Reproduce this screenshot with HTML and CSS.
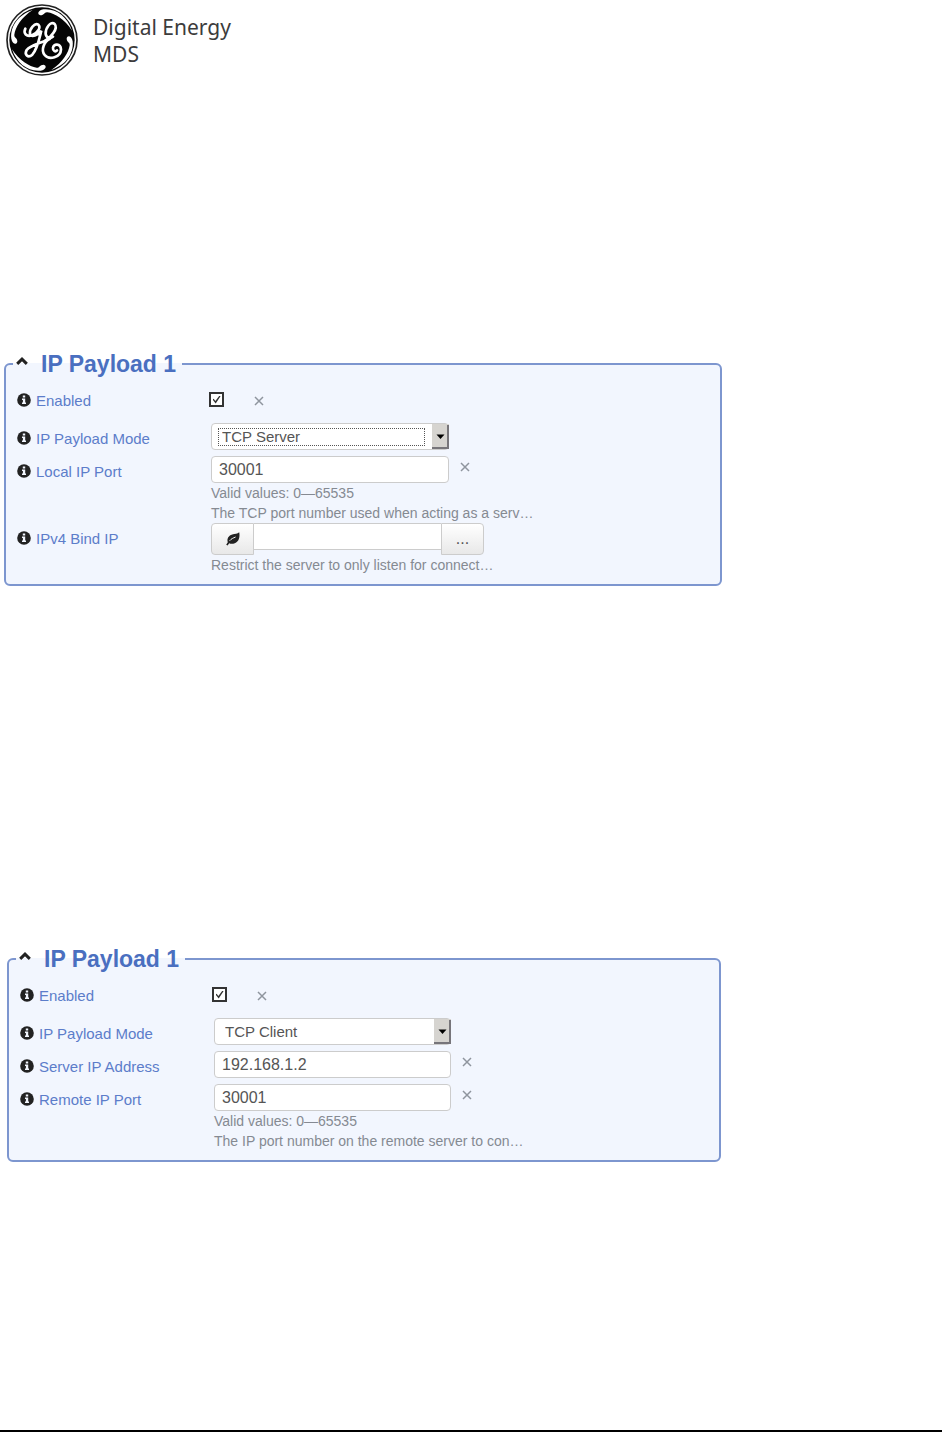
FILE: index.html
```html
<!DOCTYPE html>
<html lang="en">
  <head>
    <meta charset="UTF-8" />
    <meta name="viewport" content="width=device-width, initial-scale=1.0" />
    <title>Digital Energy MDS - IP Payload</title>
    <link rel="stylesheet" href="styles.css">
  </head>
  <body>
    <!-- shared icons -->
    <svg class="sprite" aria-hidden="true">
      <symbol id="icon-info" viewBox="0 0 14 14">
        <circle cx="7" cy="7" r="6.8" fill="#222" />
        <path d="M5.8 2.6h2.4v1.9H5.8zM5 5.6h3.2v4H9V11H5V9.600h.9V7H5z" fill="#f2f6fe" />
      </symbol>
      <symbol id="icon-close" viewBox="0 0 10 10">
        <path d="M1 1l8 8M9 1L1 9" stroke="#8f959e" stroke-width="1.5" />
      </symbol>
      <symbol id="icon-chevron" viewBox="0 0 12 8">
        <path d="M1.200 6.800L6 2.200l4.800 4.600" fill="none" stroke="#222" stroke-width="3" />
      </symbol>
      <symbol id="icon-arrow" viewBox="0 0 17 25">
        <path d="M0 0h17v25H0z" fill="#d6d4d0" />
        <path d="M0 24h16V1" fill="none" stroke="#77757a" stroke-width="2" />
        <path d="M4.500 10.500h8L8.500 15z" fill="#000" />
      </symbol>
      <symbol id="icon-leaf" viewBox="0 0 16 14">
        <path d="M14.200.2C15.200 5 13.800 9.800 9.800 11.200 7.500 12 5.500 11.800 4.200 11.200L2.600 13.600 1.200 12.800 2.800 10.200C1.600 6.400 3.800 3.400 7.200 2.400 10 1.600 12.400 1.800 14.200.2z" fill="#222" />
        <path d="M4.600 8.800C6.200 6.800 8.200 6 10.600 5" fill="none" stroke="#f4f4f4" stroke-width="1" />
      </symbol>
    </svg>

    <header class="brand">
      <svg class="brand-logo" viewBox="18 12 216 216" role="img" aria-label="GE">
        <circle cx="126" cy="120" r="105" fill="#fff" stroke="#222" stroke-width="5" />
        <circle cx="126" cy="120" r="98" fill="#050505" />
        <g fill="#fff">
          <path id="swirl" d="M121 46C111 44 113 31 130 28C168 24 202 50 216 92C194 58 164 40 142 37C132 36 134 46 121 46z" />
          <use href="#swirl" transform="rotate(90 126 120)" />
          <use href="#swirl" transform="rotate(180 126 120)" />
          <use href="#swirl" transform="rotate(270 126 120)" />
        </g>
        <g fill="none" stroke="#fff" stroke-width="8" stroke-linecap="round">
          <path d="M76 86C69 100 80 112 96 106C112 100 124 82 115 74C104 68 88 86 90 102C94 114 114 106 124 92C118 116 112 148 97 164C84 176 72 164 80 150C90 138 112 132 136 122" />
          <path d="M136 122C152 112 176 86 164 72C152 62 136 84 137 102C139 114 151 118 159 110M150 116C132 124 122 150 134 165C148 182 182 172 183 148C182 130 160 130 159 144C158 152 166 157 171 151" />
        </g>
      </svg>
      <p class="brand-name">Digital Energy<br>MDS</p>
    </header>

    <main>
      <form>
        <fieldset class="payload payload-server">
          <legend>
            <button type="button" class="icon-button" aria-label="Collapse"><svg class="chevron"><use href="#icon-chevron" /></svg></button>
            IP Payload 1
          </legend>
          <div class="field field-check">
            <label for="server-enabled"><svg class="info"><use href="#icon-info" /></svg>Enabled</label>
            <div class="control">
              <input type="checkbox" id="server-enabled" checked />
              <button type="button" class="icon-button" aria-label="Clear enabled"><svg class="close"><use href="#icon-close" /></svg></button>
            </div>
          </div>
          <div class="field">
            <label for="server-mode"><svg class="info"><use href="#icon-info" /></svg>IP Payload Mode</label>
            <div class="control">
              <span class="select focused">
                <select id="server-mode">
                  <option selected>TCP Server</option>
                  <option>TCP Client</option>
                </select>
                <svg class="arrow"><use href="#icon-arrow" /></svg>
              </span>
            </div>
          </div>
          <div class="field hinted">
            <label for="local-port"><svg class="info"><use href="#icon-info" /></svg>Local IP Port</label>
            <div>
              <div class="control">
                <input type="text" id="local-port" value="30001" />
                <button type="button" class="icon-button" aria-label="Clear port"><svg class="close"><use href="#icon-close" /></svg></button>
              </div>
              <p class="hint">Valid values: 0—65535</p>
              <p class="hint">The TCP port number used when acting as a serv…</p>
            </div>
          </div>
          <div class="field hinted">
            <label for="bind-ip"><svg class="info"><use href="#icon-info" /></svg>IPv4 Bind IP</label>
            <div>
              <div class="input-group">
                <button type="button" aria-label="Pick address"><svg class="leaf"><use href="#icon-leaf" /></svg></button>
                <input type="text" id="bind-ip" />
                <button type="button">...</button>
              </div>
              <p class="hint">Restrict the server to only listen for connect…</p>
            </div>
          </div>
        </fieldset>

        <fieldset class="payload payload-client">
          <legend>
            <button type="button" class="icon-button" aria-label="Collapse"><svg class="chevron"><use href="#icon-chevron" /></svg></button>
            IP Payload 1
          </legend>
          <div class="field field-check">
            <label for="client-enabled"><svg class="info"><use href="#icon-info" /></svg>Enabled</label>
            <div class="control">
              <input type="checkbox" id="client-enabled" checked />
              <button type="button" class="icon-button" aria-label="Clear enabled"><svg class="close"><use href="#icon-close" /></svg></button>
            </div>
          </div>
          <div class="field">
            <label for="client-mode"><svg class="info"><use href="#icon-info" /></svg>IP Payload Mode</label>
            <div class="control">
              <span class="select">
                <select id="client-mode">
                  <option>TCP Server</option>
                  <option selected>TCP Client</option>
                </select>
                <svg class="arrow"><use href="#icon-arrow" /></svg>
              </span>
            </div>
          </div>
          <div class="field">
            <label for="server-address"><svg class="info"><use href="#icon-info" /></svg>Server IP Address</label>
            <div class="control">
              <input type="text" id="server-address" value="192.168.1.2" />
              <button type="button" class="icon-button" aria-label="Clear address"><svg class="close"><use href="#icon-close" /></svg></button>
            </div>
          </div>
          <div class="field hinted">
            <label for="remote-port"><svg class="info"><use href="#icon-info" /></svg>Remote IP Port</label>
            <div>
              <div class="control">
                <input type="text" id="remote-port" value="30001" />
                <button type="button" class="icon-button" aria-label="Clear port"><svg class="close"><use href="#icon-close" /></svg></button>
              </div>
              <p class="hint">Valid values: 0—65535</p>
              <p class="hint">The IP port number on the remote server to con…</p>
            </div>
          </div>
        </fieldset>
      </form>
    </main>

    <footer></footer>
  </body>
</html>
```

FILE: styles.css
```css
* {
  box-sizing: border-box;
}
body {
  font-family: "Liberation Sans", Arial, sans-serif;
  background: #ffffff;
  margin: 0;
  min-height: 100vh;
  display: flex;
  flex-direction: column;
}
svg {
  display: block;
}
.sprite {
  display: none;
}

/* Header */
.brand {
  display: flex;
  align-items: flex-start;
  gap: 15px;
  height: 80px;
  padding: 4px 6px;
}
.brand-logo {
  width: 72px;
  height: 72px;
}
.brand-name {
  margin: 0;
  padding-top: 10px;
  font-family: "Noto Sans", sans-serif;
  font-size: 21px;
  line-height: 27px;
  color: #3c3c3c;
}

/* Panels */
main {
  padding-top: 271px;
}
.payload {
  min-width: 0;
  margin: 0 220px 0 4px;
  padding: 8px 7px 9px;
  border: 2px solid #7d96cf;
  border-radius: 6px;
  background-color: #f2f6fe;
}
.payload-client {
  margin: 360px 221px 0 7px;
}
legend {
  display: flex;
  align-items: center;
  gap: 13px;
  padding: 0 6px 0 3px;
  font-size: 23px;
  font-weight: bold;
  line-height: 26px;
  color: #4a6fc0;
}
.icon-button {
  padding: 0;
  border: none;
  background: none;
  cursor: pointer;
}
.chevron {
  width: 12px;
  height: 8px;
  margin-bottom: 6px;
}

/* Rows */
.field {
  display: grid;
  grid-template-columns: 198px 1fr;
  align-items: start;
  margin-top: 6px;
}
.field-check,
.hinted + .field {
  margin-top: 0;
}
.field-check {
  height: 32px;
}
.field label {
  display: flex;
  align-items: center;
  gap: 5px;
  padding: 6px 0 0 4px;
  font-size: 15px;
  line-height: 20px;
  color: #5c7dca;
}
.info {
  width: 14px;
  height: 14px;
  margin-bottom: 2px;
}
.control {
  display: flex;
  align-items: flex-start;
  gap: 11px;
}
.close {
  width: 10px;
  height: 10px;
}
.control .icon-button {
  padding-top: 6px;
}
.field-check .control {
  align-items: center;
  gap: 30px;
  padding-top: 7px;
}
.field-check .icon-button {
  padding-top: 2px;
}
input[type="checkbox"] {
  appearance: none;
  display: grid;
  place-items: center;
  width: 15px;
  height: 15px;
  margin: 0 0 0 -2px;
  border: 2px solid #333333;
  background-color: #ffffff;
}
input[type="checkbox"]:checked::before {
  content: "";
  width: 8px;
  height: 8px;
  background-color: #333333;
  clip-path: polygon(0 50%, 14% 42%, 36% 68%, 88% 0, 100% 8%, 40% 100%);
}
input[type="text"],
select {
  width: 238px;
  height: 27px;
  margin: 0;
  padding: 0 7px;
  border: 1px solid #cccccc;
  border-radius: 4px;
  background-color: #ffffff;
  font-family: inherit;
  font-size: 16px;
  color: #555555;
}
select {
  appearance: none;
  padding: 0 10px;
  font-size: 15px;
}
.payload-client input[type="text"],
.payload-client select {
  width: 237px;
}
.select {
  position: relative;
}
.arrow {
  position: absolute;
  top: 1px;
  right: 0;
  width: 17px;
  height: 25px;
  pointer-events: none;
}
.focused::before {
  content: "";
  position: absolute;
  inset: 5px 24px 4px 7px;
  border: 1px dotted #555555;
  pointer-events: none;
}
.hint {
  margin: 0;
  font-size: 14px;
  line-height: 20px;
  color: #858a92;
}
.input-group {
  display: flex;
  align-items: flex-start;
}
.input-group input[type="text"] {
  width: 187px;
  border-width: 1px 0;
  border-radius: 0;
}
.input-group button {
  display: grid;
  place-items: center;
  width: 43px;
  height: 32px;
  padding: 0;
  border: 1px solid #cccccc;
  border-radius: 4px 0 0 4px;
  background: linear-gradient(#ffffff, #e8e8e8);
  font-family: inherit;
  font-size: 16px;
  color: #555555;
}
.input-group button:last-child {
  border-radius: 0 4px 4px 0;
}
.leaf {
  width: 16px;
  height: 14px;
}

footer {
  margin-top: auto;
  border-bottom: 2px solid #000000;
}
```
